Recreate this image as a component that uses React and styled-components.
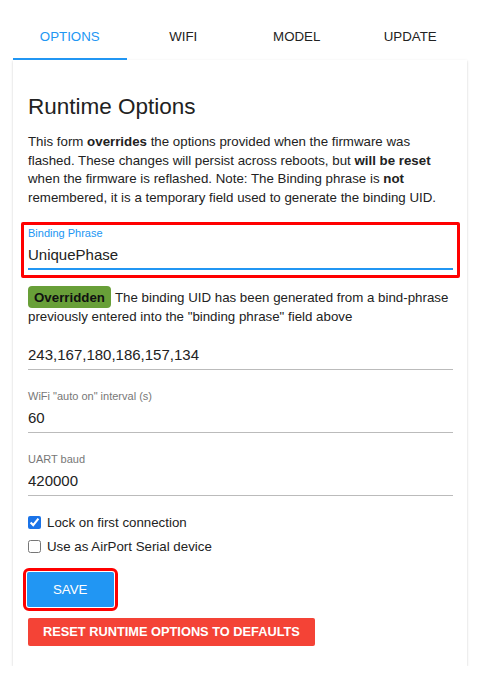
import { useState } from 'react'
import styled, { createGlobalStyle } from 'styled-components'

const GlobalStyle = createGlobalStyle`
  body {
    margin: 0;
    background: #fff;
    font-family: "Liberation Sans", Arial, sans-serif;
    color: #222;
  }
`

const Page = styled.div`
  padding: 12px 14px 0 13px;
`

const Tabs = styled.div`
  display: grid;
  grid-template-columns: repeat(4, 1fr);
  height: 48px;
`

const Tab = styled.div`
  display: flex;
  align-items: center;
  justify-content: center;
  font-size: 13.3px;
  text-transform: uppercase;
  color: ${p => (p.$active ? '#2196f3' : '#222')};
  border-bottom: 2px solid ${p => (p.$active ? '#2196f3' : 'transparent')};
  box-sizing: border-box;
  padding-top: 2px;
`

const Card = styled.div`
  background: #fff;
  padding: 34px 14px 20px 15px;
  box-shadow: 0 2px 1px -1px rgba(0, 0, 0, 0.2), 0 1px 1px 0 rgba(0, 0, 0, 0.14),
    0 1px 3px 0 rgba(0, 0, 0, 0.12);
`

const Title = styled.h1`
  margin: 0;
  font-size: 22.5px;
  font-weight: 400;
  line-height: 26px;
  color: #222;
`

const Intro = styled.p`
  margin: 13px 0 0;
  font-size: 13.3px;
  line-height: 18.7px;
`

const Field = styled.div`
  position: relative;
  margin-top: ${p => p.$top || 19}px;

  /* red annotation frame drawn over the field */
  &::after {
    content: '';
    display: ${p => (p.$marked ? 'block' : 'none')};
    position: absolute;
    top: -4px;
    bottom: -8px;
    left: -7px;
    right: -7px;
    border: 3px solid #ff0000;
    border-radius: 2px;
    pointer-events: none;
  }
`

const FieldLabel = styled.div`
  font-size: 11px;
  line-height: 14px;
  color: ${p => (p.$focused ? '#2196f3' : '#777')};
  margin-bottom: 5px;
`

const FieldInput = styled.input`
  display: block;
  width: 100%;
  box-sizing: border-box;
  border: none;
  border-bottom: ${p => (p.$focused ? '2px solid #2196f3' : '1px solid #bbb')};
  padding: 0 0 ${p => (p.$focused ? 3 : 4)}px;
  font-family: inherit;
  font-size: 15px;
  line-height: 20px;
  height: 25px;
  color: #222;
  background: transparent;
  outline: none;
`

const Note = styled.div`
  margin-top: 18px;
  font-size: 13.3px;
  line-height: 19px;
`

const Badge = styled.span`
  background: #689f38;
  color: #111;
  font-weight: 700;
  padding: 3.5px 6px;
  border-radius: 4px;
  margin-right: 4px;
`

const Checks = styled.div`
  margin-top: 18px;
  display: flex;
  flex-direction: column;
  gap: 6px;
`

const CheckRow = styled.label`
  display: flex;
  align-items: center;
  gap: 6px;
  font-size: 13.3px;
  line-height: 18px;
  input {
    margin: 0;
    width: 13px;
    height: 13px;
    accent-color: #1a73e8;
  }
`

const Actions = styled.div`
  margin-top: 16px;
  display: flex;
  flex-direction: column;
  align-items: flex-start;
  gap: 11px;
`

const Button = styled.button`
  border: none;
  border-radius: 2px;
  font-family: inherit;
  font-size: ${p => (p.$bold ? 12.8 : 13.3)}px;
  text-transform: uppercase;
  color: #fff;
  background: ${p => p.$color};
  height: ${p => p.$h}px;
  padding: 0 ${p => p.$px}px;
  margin-left: ${p => (p.$marked ? -1 : 0)}px;
  outline: ${p => (p.$marked ? '3px solid #ff0000' : 'none')};
  outline-offset: 1px;
  font-weight: ${p => (p.$bold ? 700 : 400)};
  cursor: pointer;
`

export default function App() {
  const [phrase, setPhrase] = useState('UniquePhase')
  const [uid, setUid] = useState('243,167,180,186,157,134')
  const [wifi, setWifi] = useState('60')
  const [baud, setBaud] = useState('420000')
  const [lock, setLock] = useState(true)
  const [airport, setAirport] = useState(false)

  return (
    <Page>
      <GlobalStyle />
      <Tabs>
        <Tab $active>Options</Tab>
        <Tab>WiFi</Tab>
        <Tab>Model</Tab>
        <Tab>Update</Tab>
      </Tabs>
      <Card>
        <Title>Runtime Options</Title>
        <Intro>
          This form <b>overrides</b> the options provided when the firmware was flashed. These
          changes will persist across reboots, but <b>will be reset</b> when the firmware is
          reflashed. Note: The Binding phrase is <b>not</b> remembered, it is a temporary field
          used to generate the binding UID.
        </Intro>

        <Field $marked $top={18}>
          <FieldLabel $focused>Binding Phrase</FieldLabel>
          <FieldInput $focused value={phrase} onChange={e => setPhrase(e.target.value)} />
        </Field>

        <Note>
          <Badge>Overridden</Badge>
          The binding UID has been generated from a bind-phrase previously entered into the
          "binding phrase" field above
        </Note>

        <Field $top={19}>
          <FieldInput value={uid} onChange={e => setUid(e.target.value)} />
        </Field>

        <Field $top={19}>
          <FieldLabel>WiFi "auto on" interval (s)</FieldLabel>
          <FieldInput value={wifi} onChange={e => setWifi(e.target.value)} />
        </Field>

        <Field $top={19}>
          <FieldLabel>UART baud</FieldLabel>
          <FieldInput value={baud} onChange={e => setBaud(e.target.value)} />
        </Field>

        <Checks>
          <CheckRow>
            <input type="checkbox" checked={lock} onChange={e => setLock(e.target.checked)} />
            Lock on first connection
          </CheckRow>
          <CheckRow>
            <input
              type="checkbox"
              checked={airport}
              onChange={e => setAirport(e.target.checked)}
            />
            Use as AirPort Serial device
          </CheckRow>
        </Checks>

        <Actions>
          <Button $marked $color="#2196f3" $h={35} $px={26}>
            Save
          </Button>
          <Button $color="#f44336" $h={28} $px={15} $bold>
            Reset runtime options to defaults
          </Button>
        </Actions>
      </Card>
    </Page>
  )
}
